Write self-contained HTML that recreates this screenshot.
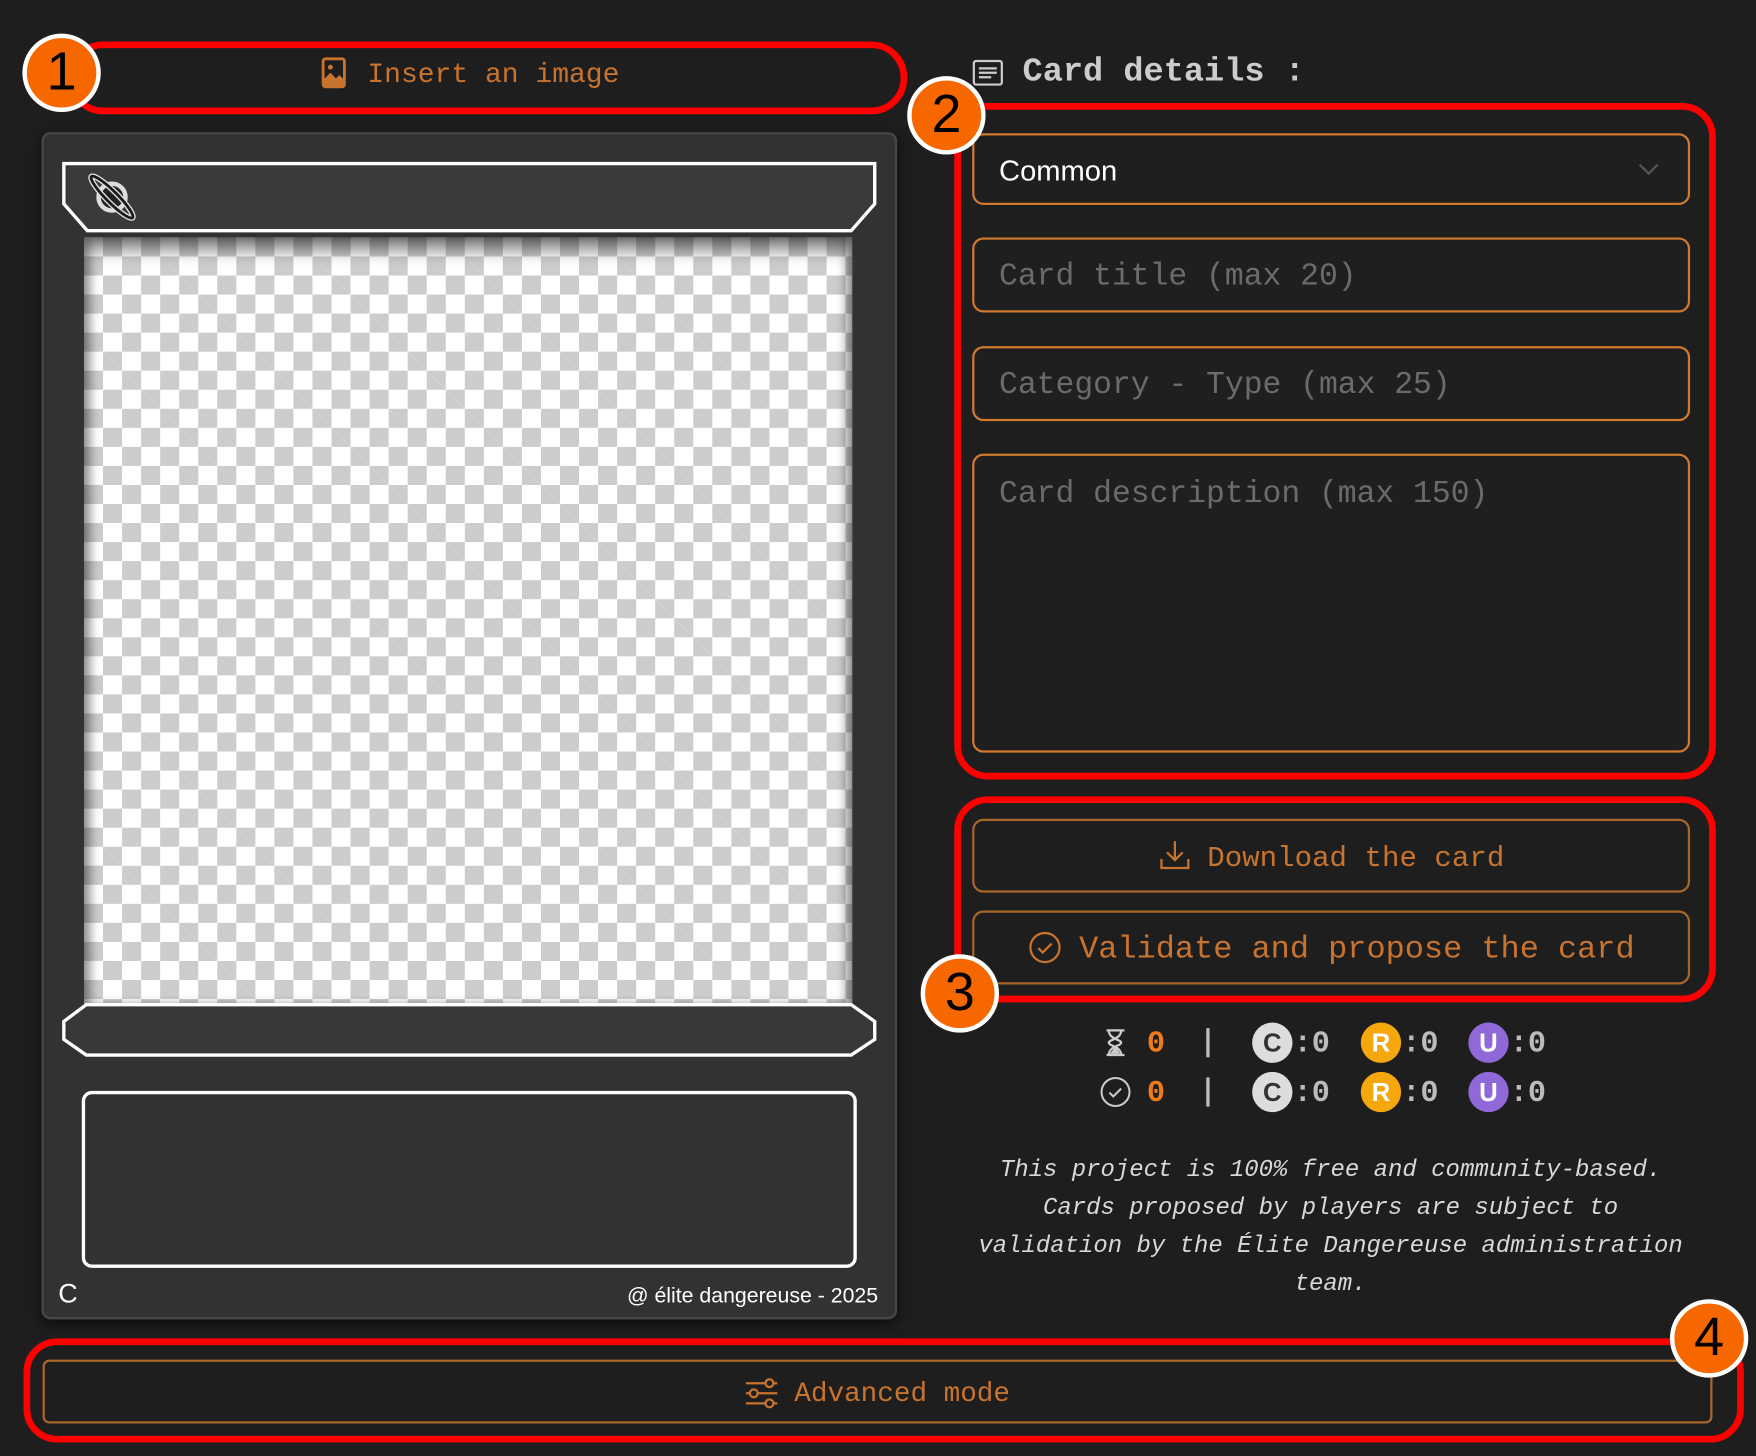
<!DOCTYPE html>
<html><head><meta charset="utf-8"><style>
html,body{margin:0;padding:0;background:#1e1e1e;width:1756px;height:1456px;overflow:hidden}
#w{position:absolute;left:0;top:0;width:1568px;height:1300px;transform:scale(1.12);transform-origin:0 0;font-family:"Liberation Mono",monospace}
.a{position:absolute}
.red{position:absolute;border:6px solid #f00;border-radius:28px;box-sizing:border-box}
.num{position:absolute;width:70px;height:70px;border-radius:50%;background:#f76700;border:4px solid #fff;box-sizing:border-box;color:#000;font-family:"Liberation Sans",sans-serif;font-size:48px;line-height:62px;text-align:center}
.inp{position:absolute;left:868px;width:641px;border:2px solid #d07a2e;border-radius:10px;box-sizing:border-box;background:#1f1f1f;color:#6b6b6b;font-size:28px;padding-left:22px}
.btn{position:absolute;border:2px solid #a8662a;border-radius:10px;box-sizing:border-box;color:#c8732e;text-align:center}
.st{position:absolute;font-size:27px;color:#bbb;font-weight:bold}
.bd{position:absolute;width:36px;height:36px;border-radius:50%;font-family:"Liberation Sans",sans-serif;font-weight:bold;font-size:23px;line-height:36px;text-align:center}
.p{position:absolute;left:850px;width:676px;text-align:center;font-style:italic;color:#d8d8d8;font-size:21.4px;line-height:34px}
</style></head><body><div id="w">

<div class="red" style="left:60px;top:37px;width:750px;height:65px;border-radius:32px"></div>
<svg class="a" style="left:287px;top:51px" width="22" height="28" viewBox="0 0 22 28"><rect x="1.5" y="1.5" width="19" height="25" rx="2" fill="none" stroke="#c8732e" stroke-width="2.5"/><circle cx="8" cy="9" r="2.2" fill="#c8732e"/><path d="M2 26 L2 20 L8 14 L13 19 L16 16 L20 20 L20 26Z" fill="#c8732e"/></svg>
<div class="a" style="left:328px;top:52px;font-size:25px;color:#c8732e">Insert an image</div>
<div class="num" style="left:20px;top:30px">1</div>

<div class="a" style="left:37px;top:118px;width:764px;height:1060px;background:#323232;border:2px solid #474747;border-radius:8px;box-sizing:border-box;box-shadow:0 4px 12px rgba(0,0,0,.6)"></div>
<div class="a" style="left:75px;top:212px;width:686px;height:685px;background-color:#fff;background-image:linear-gradient(45deg,#ccc 25%,transparent 25%,transparent 75%,#ccc 75%),linear-gradient(45deg,#ccc 25%,transparent 25%,transparent 75%,#ccc 75%);background-size:34px 34px;background-position:0 0,17px 17px;box-shadow:inset 0 12px 14px rgba(0,0,0,.45),inset 6px 0 8px rgba(0,0,0,.25),inset -6px 0 8px rgba(0,0,0,.25)"></div>
<svg class="a" style="left:50px;top:140px" width="740" height="810" viewBox="0 0 740 810">
<path d="M7 6 L731 6 L731 42 L710 66 L28 66 L7 42Z" fill="#3a3a3a" stroke="#fff" stroke-width="3"/>
<path d="M27 757 L710 757 L731 772 L731 788 L710 802 L27 802 L7 788 L7 772Z" fill="#383838" stroke="#fff" stroke-width="3"/>
<g transform="translate(50,36) rotate(-45)" fill="none">
<circle r="12" fill="#222" stroke="#ddd" stroke-width="4"/>
<ellipse rx="5" ry="26" stroke="#ddd" stroke-width="5"/><ellipse rx="5" ry="26" stroke="#1a1a1a" stroke-width="2.5"/>
</g>
</svg>
<div class="a" style="left:73px;top:974px;width:692px;height:158px;border:3px solid #fff;border-radius:9px;box-sizing:border-box;background:#333"></div>
<div class="a" style="left:52px;top:1142px;font-family:'Liberation Sans',sans-serif;font-size:24px;color:#fff">C</div>
<div class="a" style="left:540px;top:1147px;width:244px;text-align:right;font-family:'Liberation Sans',sans-serif;font-size:19px;color:#fff">@ élite dangereuse - 2025</div>

<svg class="a" style="left:868px;top:53px" width="28" height="24" viewBox="0 0 28 24"><rect x="1.5" y="1.5" width="25" height="21" rx="2" fill="none" stroke="#ccc" stroke-width="2"/><path d="M6 8h16M6 12h16M6 16h11" stroke="#ccc" stroke-width="2"/></svg>
<div class="a" style="left:913px;top:48px;font-size:30px;font-weight:bold;color:#ccc">Card details :</div>

<div class="red" style="left:852px;top:92px;width:680px;height:604px;border-radius:30px"></div>
<div class="inp" style="top:119px;height:64px;color:#fff;font-size:26px;line-height:62px;font-family:'Liberation Sans',sans-serif">Common</div>
<svg class="a" style="left:1462px;top:144px" width="20" height="14" viewBox="0 0 20 14"><path d="M2 3 L10 11 L18 3" fill="none" stroke="#555" stroke-width="2"/></svg>
<div class="inp" style="top:212px;height:67px;line-height:68px">Card title (max 20)</div>
<div class="inp" style="top:309px;height:67px;line-height:68px">Category - Type (max 25)</div>
<div class="inp" style="top:405px;height:267px;padding-top:18px;line-height:34px">Card description (max 150)</div>
<div class="num" style="left:810px;top:68px">2</div>

<div class="red" style="left:852px;top:711px;width:680px;height:184px;border-radius:30px"></div>
<div class="btn" style="left:868px;top:731px;width:641px;height:66px;line-height:66px;font-size:26px"><svg style="vertical-align:-5px;margin-right:14px" width="30" height="30" viewBox="0 0 30 30"><path d="M15 3v17M8 13l7 7 7-7M3 19v8h24v-8" fill="none" stroke="#c8732e" stroke-width="2"/></svg>Download the card</div>
<div class="btn" style="left:868px;top:813px;width:641px;height:66px;line-height:66px;font-size:28.5px"><svg style="vertical-align:-6px;margin-right:16px" width="30" height="30" viewBox="0 0 30 30"><circle cx="15" cy="15" r="13" fill="none" stroke="#c8732e" stroke-width="2"/><path d="M9 15.5l4 4 8-8" fill="none" stroke="#c8732e" stroke-width="2"/></svg>Validate and propose the card</div>
<div class="num" style="left:822px;top:852px">3</div>

<svg class="a" style="left:986px;top:918px" width="20" height="26" viewBox="0 0 20 26"><path d="M2 2h16M2 24h16M4 2c0 8 11 8 11 11s-11 3-11 11M15 2c0 8-11 8-11 11s11 3 11 11" fill="none" stroke="#ccc" stroke-width="2"/><path d="M5 23 L10 16 L14 23Z" fill="#ccc"/></svg>
<svg class="a" style="left:982px;top:961px" width="28" height="28" viewBox="0 0 28 28"><circle cx="14" cy="14" r="12.5" fill="none" stroke="#ccc" stroke-width="1.8"/><path d="M8.5 14.5l3.5 3.5 7-7" fill="none" stroke="#ccc" stroke-width="1.8"/></svg>
<div class="st" style="left:1024px;top:918px;color:#f07a1a">0</div>
<div class="st" style="left:1024px;top:962px;color:#f07a1a">0</div>
<div class="a" style="left:1077px;top:918px;width:3px;height:26px;background:#bbb"></div>
<div class="a" style="left:1077px;top:962px;width:3px;height:26px;background:#bbb"></div>
<div class="bd" style="left:1118px;top:913px;background:#ddd;color:#333">C</div>
<div class="bd" style="left:1118px;top:957px;background:#ddd;color:#333">C</div>
<div class="bd" style="left:1215px;top:913px;background:#f5a70e;color:#fff">R</div>
<div class="bd" style="left:1215px;top:957px;background:#f5a70e;color:#fff">R</div>
<div class="bd" style="left:1311px;top:913px;background:#9068d8;color:#fff">U</div>
<div class="bd" style="left:1311px;top:957px;background:#9068d8;color:#fff">U</div>
<div class="st" style="left:1155px;top:918px">:0</div><div class="st" style="left:1155px;top:962px">:0</div>
<div class="st" style="left:1252px;top:918px">:0</div><div class="st" style="left:1252px;top:962px">:0</div>
<div class="st" style="left:1348px;top:918px">:0</div><div class="st" style="left:1348px;top:962px">:0</div>

<div class="p" style="top:1028px">This project is 100% free and community-based.<br>Cards proposed by players are subject to<br>validation by the Élite Dangereuse administration<br>team.</div>

<div class="red" style="left:21px;top:1195px;width:1536px;height:93px;border-radius:30px"></div>
<div class="btn" style="left:38px;top:1214px;width:1491px;height:57px;line-height:59px;font-size:24.7px;border-radius:6px"><svg style="vertical-align:-7px;margin-right:14px" width="30" height="28" viewBox="0 0 30 28"><path d="M1 5h28M1 14h28M1 23h28" stroke="#c8732e" stroke-width="2"/><circle cx="22" cy="5" r="3.5" fill="#1f1f1f" stroke="#c8732e" stroke-width="2"/><circle cx="8" cy="14" r="3.5" fill="#1f1f1f" stroke="#c8732e" stroke-width="2"/><circle cx="22" cy="23" r="3.5" fill="#1f1f1f" stroke="#c8732e" stroke-width="2"/></svg>Advanced mode</div>
<div class="num" style="left:1491px;top:1160px">4</div>

</div></body></html>
